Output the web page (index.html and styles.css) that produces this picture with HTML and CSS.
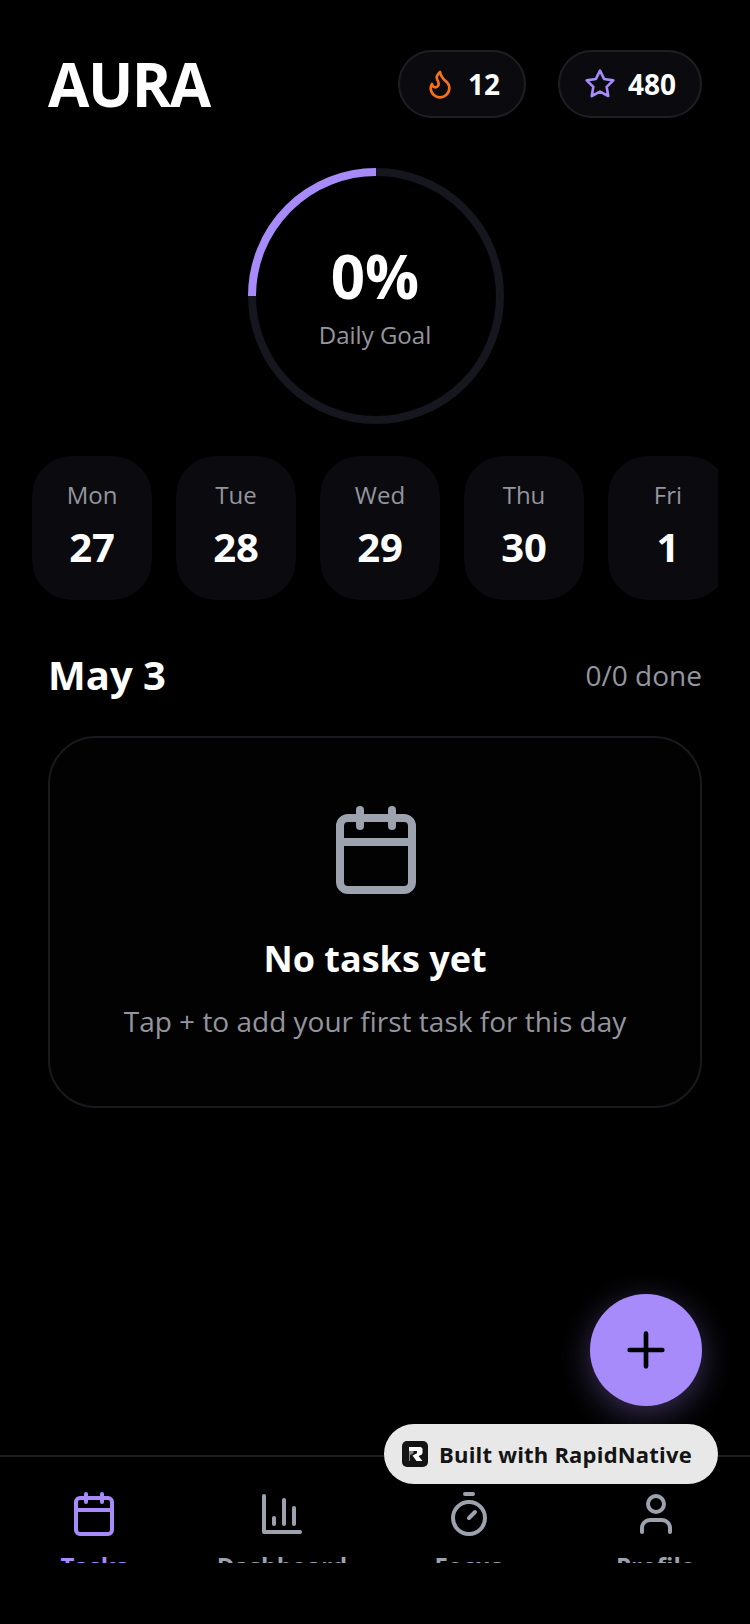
FILE: index.html
```html
<!DOCTYPE html>
<html lang="en">
<head>
  <meta charset="UTF-8" />
  <title>AURA</title>
  <link rel="stylesheet" href="styles.css">
</head>
<body>
  <div class="app">
    <header class="header">
      <h1 class="logo">AURA</h1>
      <div class="stats">
        <div class="pill">
          <svg class="pill-icon flame" viewBox="0 0 24 24"><path d="M8.5 14.5A2.5 2.5 0 0 0 11 12c0-1.38-.5-2-1-3-1.072-2.143-.224-4.054 2-6 .5 2.5 2 4.9 4 6.5 2 1.6 3 3.5 3 5.5a7 7 0 1 1-14 0c0-1.153.433-2.294 1-3a2.5 2.5 0 0 0 2.5 2.5z"/></svg>
          <span>12</span>
        </div>
        <div class="pill">
          <svg class="pill-icon star" viewBox="0 0 24 24"><polygon points="12 2 15.09 8.26 22 9.27 17 14.14 18.18 21.02 12 17.77 5.82 21.02 7 14.14 2 9.27 8.91 8.26 12 2"/></svg>
          <span>480</span>
        </div>
      </div>
    </header>

    <section class="goal">
      <svg class="ring" viewBox="0 0 256 256">
        <circle class="ring-track" cx="128" cy="128" r="124"/>
        <path class="ring-fill" d="M4 128A124 124 0 0 1 128 4"/>
      </svg>
      <div class="goal-text">
        <div class="goal-value">0%</div>
        <div class="goal-label">Daily Goal</div>
      </div>
    </section>

    <div class="days">
      <div class="day"><span class="day-name">Mon</span><span class="day-num">27</span></div>
      <div class="day"><span class="day-name">Tue</span><span class="day-num">28</span></div>
      <div class="day"><span class="day-name">Wed</span><span class="day-num">29</span></div>
      <div class="day"><span class="day-name">Thu</span><span class="day-num">30</span></div>
      <div class="day"><span class="day-name">Fri</span><span class="day-num">1</span></div>
    </div>

    <div class="date-row">
      <h2 class="date-title">May 3</h2>
      <span class="date-count">0/0 done</span>
    </div>

    <section class="empty">
      <svg class="empty-icon" viewBox="0 0 24 24"><rect x="3" y="4" width="18" height="18" rx="2"/><path d="M16 2v4M8 2v4M3 10h18"/></svg>
      <h3 class="empty-title">No tasks yet</h3>
      <p class="empty-text">Tap + to add your first task for this day</p>
    </section>

    <nav class="tabs">
      <div class="tab active">
        <svg class="tab-icon" viewBox="0 0 24 24"><rect x="3" y="4" width="18" height="18" rx="2"/><path d="M16 2v4M8 2v4M3 10h18"/></svg>
        <span class="tab-label">Tasks</span>
      </div>
      <div class="tab">
        <svg class="tab-icon" viewBox="0 0 24 24"><path d="M3 3v18h18M18 17V9M13 17V5M8 17v-3"/></svg>
        <span class="tab-label">Dashboard</span>
      </div>
      <div class="tab">
        <svg class="tab-icon" viewBox="0 0 24 24"><path d="M10 2h4M12 14l3-3"/><circle cx="12" cy="14" r="8"/></svg>
        <span class="tab-label">Focus</span>
      </div>
      <div class="tab">
        <svg class="tab-icon" viewBox="0 0 24 24"><path d="M19 21v-2a4 4 0 0 0-4-4H9a4 4 0 0 0-4 4v2"/><circle cx="12" cy="7" r="4"/></svg>
        <span class="tab-label">Profile</span>
      </div>
    </nav>

    <button class="fab" aria-label="Add task">
      <svg viewBox="0 0 24 24"><path d="M12 5v14M5 12h14"/></svg>
    </button>

    <div class="built">
      <svg class="built-logo" viewBox="0 0 26 26">
        <rect width="26" height="26" rx="5" fill="#141414"/>
        <path d="M7 6h11a2.5 2.5 0 0 1 2.5 2.5v3.2a2.5 2.5 0 0 1-1.6 2.3l-2.4.9 4 5.1h-6l-4-5.5 4.5-2.2V10H7z" fill="#fff"/>
        <path d="M7 10h4.5v2.300l-3.500 2v5.700H7z" fill="#888"/>
      </svg>
      <span>Built with RapidNative</span>
    </div>
  </div>
</body>
</html>
```

FILE: styles.css
```css
* {
  box-sizing: border-box;
}
html, body {
  margin: 0;
  background: #000;
}
body {
  font-family: 'Open Sans', sans-serif;
  color: #fff;
}
svg {
  fill: none;
  stroke-linecap: round;
  stroke-linejoin: round;
  stroke-width: 2;
  display: block;
}
h1, h2, h3, p {
  margin: 0;
}
.app {
  position: relative;
  width: 750px;
  height: 1624px;
  overflow: hidden;
  display: flex;
  flex-direction: column;
}
.header {
  display: flex;
  justify-content: space-between;
  align-items: center;
  padding: 50px 48px 0;
}
.logo {
  font-size: 60px;
  line-height: 67px;
  font-weight: 700;
  letter-spacing: -1.5px;
}
.stats {
  display: flex;
  gap: 32px;
}
.pill {
  display: flex;
  align-items: center;
  gap: 12px;
  height: 68px;
  padding: 0 24px;
  border: 2px solid #1f1f23;
  border-radius: 34px;
  background: #0a0a0f;
  font-size: 28px;
  font-weight: 700;
}
.pill-icon {
  width: 32px;
  height: 32px;
}
.flame {
  stroke: #f97316;
}
.star {
  stroke: #a78bfa;
}
.goal {
  position: relative;
  width: 256px;
  height: 256px;
  margin: 50px 0 0 248px;
}
.ring {
  width: 256px;
  height: 256px;
}
.ring-track,
.ring-fill {
  stroke-width: 8;
  stroke-linecap: butt;
}
.ring-track {
  stroke: #16161f;
}
.ring-fill {
  stroke: #a78bfa;
}
.goal-text {
  position: absolute;
  inset: 0 2px 0 0;
  display: flex;
  flex-direction: column;
  align-items: center;
  justify-content: center;
  padding-bottom: 6px;
}
.goal-value {
  font-size: 60px;
  line-height: 82px;
  font-weight: 700;
}
.goal-label {
  margin-top: 2px;
  font-size: 24px;
  line-height: 32px;
  color: #94959e;
}
.days {
  display: flex;
  gap: 24px;
  width: 686px;
  margin: 32px 0 0 32px;
  overflow: hidden;
}
.day {
  flex: 0 0 120px;
  height: 144px;
  border-radius: 40px;
  background: #0a0a0f;
  display: flex;
  flex-direction: column;
  align-items: center;
  padding-top: 23px;
}
.day-name {
  font-size: 24px;
  line-height: 32px;
  color: #94959e;
}
.day-num {
  margin-top: 9px;
  font-size: 40px;
  line-height: 54px;
  font-weight: 700;
}
.date-row {
  display: flex;
  justify-content: space-between;
  align-items: center;
  padding: 0 48px;
  margin-top: 48px;
}
.date-title {
  font-size: 40px;
  line-height: 54px;
  font-weight: 700;
}
.date-count {
  font-size: 28px;
  color: #94959e;
}
.empty {
  margin: 34px 48px 0;
  height: 372px;
  border: 2px solid #1a1a1e;
  border-radius: 48px;
  background: #020203;
  display: flex;
  flex-direction: column;
  align-items: center;
  padding: 64px 0 0 2px;
}
.empty-icon {
  width: 96px;
  height: 96px;
  stroke: #9ca3af;
}
.empty-title {
  margin: 36px 2px 0 0;
  font-size: 36px;
  line-height: 49px;
  font-weight: 700;
}
.empty-text {
  margin: 19px 2px 0 0;
  font-size: 28px;
  line-height: 38px;
  color: #94959e;
}
.tabs {
  position: absolute;
  left: 0;
  right: 0;
  top: 1455px;
  height: 108px;
  border-top: 2px solid #1f1f23;
  display: grid;
  grid-template-columns: 188px 188px 185px 189px;
  overflow: hidden;
  color: #9ca3af;
}
.tab {
  display: flex;
  flex-direction: column;
  align-items: center;
  padding-top: 33px;
}
.tab.active {
  color: #a78bfa;
}
.tab-icon {
  width: 48px;
  height: 48px;
  stroke: currentColor;
}
.tab-label {
  margin-top: 11px;
  font-size: 24px;
  line-height: 33px;
  font-weight: 700;
}
.fab {
  position: absolute;
  left: 590px;
  top: 1294px;
  width: 112px;
  height: 112px;
  padding: 0;
  border: none;
  border-radius: 50%;
  background: #a78bfa;
  box-shadow: 0 8px 32px rgba(167, 139, 250, 0.35);
  display: flex;
  align-items: center;
  justify-content: center;
}
.fab svg {
  width: 56px;
  height: 56px;
  stroke: #000;
}
.built {
  position: absolute;
  left: 384px;
  top: 1424px;
  width: 334px;
  height: 60px;
  border-radius: 30px;
  background: #e8e8e8;
  display: flex;
  align-items: center;
  gap: 11px;
  padding-left: 18px;
  color: #141414;
  font-size: 22px;
  font-weight: 700;
  letter-spacing: 0.2px;
}
.built-logo {
  width: 26px;
  height: 26px;
}
```
